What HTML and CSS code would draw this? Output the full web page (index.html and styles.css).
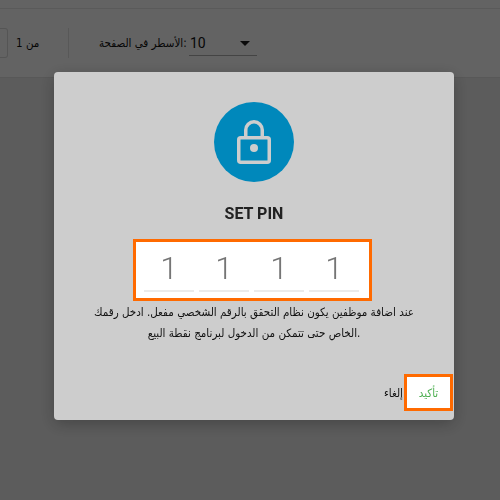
FILE: index.html
```html
<!DOCTYPE html>
<html lang="ar">
<head>
<meta charset="utf-8">
<title>Set PIN</title>
<link rel="stylesheet" href="styles.css">
</head>
<body>
<div class="page">
  <div class="top-strip"></div>
  <div class="pager">
    <div class="page-input"></div>
    <span class="page-of">1 من</span>
    <div class="divider"></div>
    <span class="rows-label">الأسطر في الصفحة:</span>
    <div class="rows-select">
      <span>10</span>
      <svg class="caret" width="10" height="5" viewBox="0 0 10 5"><path d="M0 0h10L5 5z" fill="#1a1a1a"/></svg>
    </div>
  </div>
</div>
<div class="scrim"></div>
<div class="dialog">
  <div class="badge">
    <svg width="34" height="44" viewBox="0 0 34 44" fill="none" stroke="#cdcdcd" stroke-width="3.5">
      <rect x="1.75" y="17.75" width="30.5" height="24.5" rx="2"/>
      <path d="M8.75 17.75V10a8.25 8.25 0 0 1 16.5 0v7.75"/>
      <circle cx="17" cy="28" r="4" fill="#cdcdcd" stroke="none"/>
    </svg>
  </div>
  <h1 class="title">SET PIN</h1>
  <div class="pin-box">
    <div class="pin-cell">1</div>
    <div class="pin-cell">1</div>
    <div class="pin-cell">1</div>
    <div class="pin-cell">1</div>
  </div>
  <p class="message">عند اضافة موظفين يكون نظام التحقق بالرقم الشخصي مفعل. ادخل رقمك الخاص حتى تتمكن من الدخول لبرنامج نقطة البيع.</p>
  <div class="actions">
    <span class="cancel">إلغاء</span>
    <div class="confirm"><span>تأكيد</span></div>
  </div>
</div>
</body>
</html>
```
FILE: styles.css
```css
* { box-sizing: border-box; }
html, body { margin: 0; height: 100%; overflow: hidden; }
body { background: #e6e6e6; font-family: "Roboto", "Liberation Sans", sans-serif; }
.page { background: #e6e6e6; }
.top-strip { height: 9px; background: #f8f8f8; border-bottom: 1px solid #e0e0e0; }
.pager {
  height: 69px;
  display: flex;
  align-items: center;
  background: #f8f8f8;
  border-bottom: 1px solid #dcdcdc;
  padding-bottom: 1px;
}
.page-input { width: 8px; height: 30px; border: 1px solid #d4d4d4; border-left: 0; border-radius: 0 3px 3px 0; }
.page-of { margin-left: 8px; width: 22px; font-size: 11.5px; color: #111; font-family: "DejaVu Sans Condensed", "DejaVu Sans", sans-serif; white-space: nowrap; }
.divider { width: 1px; height: 30px; background: #dcdcdc; margin-left: 30px; }
.rows-label { margin-left: 30px; width: 84px; font-size: 11.5px; color: #111; font-family: "DejaVu Sans Condensed", "DejaVu Sans", sans-serif; white-space: nowrap; }
.rows-select {
  margin-left: 6px;
  margin-top: 2px;
  width: 68px;
  height: 25px;
  display: flex;
  align-items: center;
  justify-content: space-between;
  padding: 0 7px 0 1px;
  border-bottom: 1px solid #aaa;
  font-size: 14px;
  color: #111;
}
.caret { margin-top: 1px; }
.scrim { position: fixed; inset: 0; background: rgba(0,0,0,.6); }
.dialog {
  position: fixed;
  left: 54px;
  top: 72px;
  width: 400px;
  height: 348px;
  background: #cdcdcd;
  border-radius: 4px;
  box-shadow: 0 4px 16px rgba(0,0,0,.25);
  display: flex;
  flex-direction: column;
  align-items: center;
  padding-top: 30px;
}
.badge {
  width: 80px;
  height: 80px;
  border-radius: 50%;
  background: #0088bb;
  display: flex;
  align-items: center;
  justify-content: center;
  flex: none;
}
.title {
  margin: 21px 0 0;
  font-size: 16px;
  line-height: 22px;
  font-weight: 700;
  color: #222;
}
.pin-box {
  margin-top: 14px;
  width: 239px;
  height: 62px;
  margin-left: -3px;
  flex: none;
  background: #fff;
  border: 3px solid #ff6a00;
  display: flex;
  gap: 5px;
  padding: 0 10px 0 8px;
}
.pin-cell {
  width: 50px;
  height: 50px;
  border-bottom: 2px solid #ebebeb;
  text-align: center;
  font-size: 32px;
  font-weight: 300;
  line-height: 52px;
  color: #757575;
}
.message {
  margin: 1px 0 0;
  width: 330px;
  text-align: center;
  font-family: "DejaVu Sans Condensed", "DejaVu Sans", sans-serif;
  font-size: 11.5px;
  line-height: 21px;
  color: #111;
}
.actions {
  margin-top: auto;
  margin-bottom: 9px;
  align-self: flex-end;
  margin-right: 1px;
  display: flex;
  align-items: center;
}
.cancel { font-family: "DejaVu Sans Condensed", "DejaVu Sans", sans-serif; font-size: 11.5px; color: #111; margin-right: 1px; }
.confirm {
  width: 49px;
  height: 37px;
  background: #fff;
  border: 3px solid #ff6a00;
  display: flex;
  align-items: center;
  justify-content: center;
  font-family: "DejaVu Sans Condensed", "DejaVu Sans", sans-serif;
  font-size: 11.5px;
  color: #4caf50;
}
```
